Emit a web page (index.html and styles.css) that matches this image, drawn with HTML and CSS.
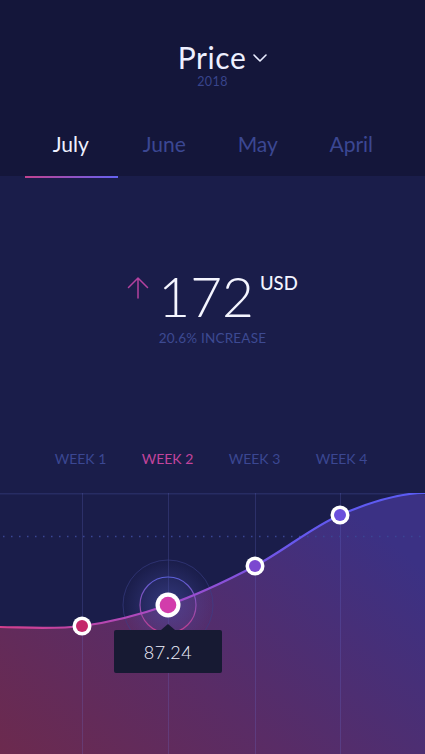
FILE: index.html
```html
<!DOCTYPE html>
<html lang="en">
<head>
<meta charset="utf-8">
<title>Price</title>
<link rel="stylesheet" href="styles.css">
</head>
<body>
<div class="screen">
  <header class="header">
    <div class="title-row">
      <span class="title">Price</span>
      <svg class="chevron" width="14" height="8" viewBox="0 0 14 8"><path d="M1 1 L7 7 L13 1" fill="none" stroke="#e9ecff" stroke-width="1.6" stroke-linecap="round" stroke-linejoin="round"/></svg>
    </div>
    <div class="year">2018</div>
    <nav class="tabs">
      <span class="tab active">July</span>
      <span class="tab">June</span>
      <span class="tab">May</span>
      <span class="tab">April</span>
    </nav>
  </header>
  <main class="main">
    <section class="hero">
      <div class="value-row">
        <svg class="arrow" width="22" height="22" viewBox="0 0 22 22"><path d="M11 1 L11 21 M1.5 10.5 L11 1 L20.5 10.5" fill="none" stroke="#b3419f" stroke-width="1.5" stroke-linecap="round" stroke-linejoin="round"/></svg>
        <span class="value">172</span>
        <span class="unit">USD</span>
      </div>
      <div class="change">20.6% INCREASE</div>
    </section>
    <div class="weeks">
      <span class="week">WEEK 1</span>
      <span class="week active">WEEK 2</span>
      <span class="week">WEEK 3</span>
      <span class="week">WEEK 4</span>
    </div>
    <div class="chart">
      <svg class="chart-svg" width="425" height="261" viewBox="0 0 425 261">
        <defs>
          <linearGradient id="fillGrad" x1="0" y1="1" x2="1" y2="0.3">
            <stop offset="0" stop-color="#6c2a4e"/>
            <stop offset="0.45" stop-color="#592c66"/>
            <stop offset="1" stop-color="#3b3184"/>
          </linearGradient>
          <linearGradient id="lineGrad" x1="0" y1="0" x2="1" y2="0">
            <stop offset="0" stop-color="#d43f8c"/>
            <stop offset="0.4" stop-color="#a44cc8"/>
            <stop offset="0.7" stop-color="#6558ee"/>
            <stop offset="1" stop-color="#5a5cf5"/>
          </linearGradient>
          <linearGradient id="ringGrad" x1="0" y1="0" x2="0" y2="1">
            <stop offset="0" stop-color="#5a5fd8"/>
            <stop offset="1" stop-color="#c43d8e"/>
          </linearGradient>
          <radialGradient id="glow" cx="0.5" cy="0.5" r="0.5">
            <stop offset="0" stop-color="#4a4fa8" stop-opacity="0.55"/>
            <stop offset="1" stop-color="#4a4fa8" stop-opacity="0"/>
          </radialGradient>
        </defs>
        <path d="M0,134 C27.3,134.5 54.7,136.5 82,133 C110.7,129.4 139.3,121.9 168,112 C197,102 226,88.2 255,73 C283.3,58.2 311.7,34.2 340,22 C368.3,9.8 396.7,0 425,0 L425,261 L0,261 Z" fill="url(#fillGrad)"/>
        <rect x="0" y="0" width="425" height="1.5" fill="#272c63"/>
        <g stroke="rgba(110,120,220,0.22)" stroke-width="1">
          <line x1="82.5" y1="0" x2="82.5" y2="261"/>
          <line x1="168.5" y1="0" x2="168.5" y2="261"/>
          <line x1="255.5" y1="0" x2="255.5" y2="261"/>
          <line x1="340.5" y1="0" x2="340.5" y2="261"/>
        </g>
        <line x1="3" y1="43.5" x2="425" y2="43.5" stroke="#3a4694" stroke-width="1.5" stroke-dasharray="1.5 6.5"/>
        <circle cx="168" cy="112" r="45" fill="url(#glow)"/>
        <circle cx="168" cy="112" r="45" fill="none" stroke="#3a3f88" stroke-opacity="0.6" stroke-width="1"/>
        <circle cx="168" cy="112" r="28" fill="none" stroke="url(#ringGrad)" stroke-width="1.2"/>
        <path d="M0,134 C27.3,134.5 54.7,136.5 82,133 C110.7,129.4 139.3,121.9 168,112 C197,102 226,88.2 255,73 C283.3,58.2 311.7,34.2 340,22 C368.3,9.8 396.7,0 425,0" fill="none" stroke="url(#lineGrad)" stroke-width="2.2"/>
        <circle cx="82" cy="133" r="9.5" fill="#ffffff"/>
        <circle cx="82" cy="133" r="6" fill="#c4286a"/>
        <circle cx="255" cy="73" r="9.5" fill="#ffffff"/>
        <circle cx="255" cy="73" r="6" fill="#7b48d0"/>
        <circle cx="340" cy="22" r="9.5" fill="#ffffff"/>
        <circle cx="340" cy="22" r="6" fill="#6a4fdc"/>
        <circle cx="168" cy="112" r="12.5" fill="#ffffff"/>
        <circle cx="168" cy="112" r="8.3" fill="#d23cab"/>
      </svg>
      <div class="tooltip">87.24</div>
    </div>
  </main>
</div>
</body>
</html>
```

FILE: styles.css
```css
* {
  box-sizing: border-box;
}

html, body {
  margin: 0;
  padding: 0;
  background: #1a1d4a;
}

body {
  font-family: Lato, "Open Sans", sans-serif;
  width: 425px;
  height: 754px;
  overflow: hidden;
}

.screen {
  width: 425px;
  height: 754px;
  display: flex;
  flex-direction: column;
}

.header {
  background: #14163a;
  padding-top: 41px;
  height: 176px;
}

.title-row {
  display: flex;
  justify-content: center;
  align-items: center;
  height: 32px;
  gap: 7px;
  padding-left: 20px;
}

.title {
  font-size: 30px;
  line-height: 32px;
  color: #eef0ff;
  font-weight: 400;
  letter-spacing: 0.6px;
}

.chevron {
  margin-top: 2px;
}

.year {
  text-align: center;
  font-size: 12.5px;
  line-height: 14px;
  margin-top: 2px;
  color: #38448c;
  letter-spacing: 0.4px;
}

.tabs {
  display: grid;
  grid-template-columns: repeat(4, 93.5px);
  padding-left: 24px;
  margin-top: 40px;
}

.tab {
  position: relative;
  text-align: center;
  font-size: 21px;
  line-height: 30px;
  color: #3b4792;
  padding-bottom: 17px;
}

.tab.active {
  color: #eef0ff;
}

.tab.active::after {
  content: "";
  position: absolute;
  left: 1px;
  right: 0;
  bottom: -2px;
  height: 2px;
  background: linear-gradient(90deg, #c2428f, #6462f2);
}

.main {
  flex: 1;
  display: flex;
  flex-direction: column;
  background: #1a1d4a;
}

.hero {
  padding-top: 90px;
  display: flex;
  flex-direction: column;
  align-items: center;
}

.value-row {
  display: flex;
  align-items: flex-start;
  height: 60px;
  padding-left: 0;
}

.arrow {
  margin-top: 11px;
  margin-right: 9px;
}

.value {
  font-size: 55px;
  line-height: 60px;
  font-weight: 300;
  color: #f4f5ff;
  letter-spacing: 0;
}

.unit {
  font-size: 18.5px;
  line-height: 20px;
  margin-top: 7px;
  margin-left: 6px;
  color: #f4f5ff;
  font-weight: 500;
}

.change {
  margin-top: 3px;
  font-size: 13.5px;
  line-height: 18px;
  color: #3d4a92;
  letter-spacing: 0.2px;
}

.weeks {
  display: grid;
  grid-template-columns: repeat(4, 87px);
  padding-left: 37px;
  margin-top: 103px;
}

.week {
  text-align: center;
  font-size: 14px;
  line-height: 18px;
  color: #3b4792;
}

.week.active {
  color: #c2449c;
}

.chart {
  position: relative;
  margin-top: 25px;
  height: 261px;
}

.chart-svg {
  display: block;
}

.tooltip {
  position: absolute;
  left: 114px;
  top: 137px;
  width: 108px;
  height: 43px;
  background: #171a33;
  border-radius: 2px;
  color: #f2f3ff;
  font-size: 18px;
  font-weight: 300;
  letter-spacing: 0.5px;
  display: flex;
  align-items: center;
  justify-content: center;
}

.tooltip::before {
  content: "";
  position: absolute;
  left: 47px;
  top: -6px;
  border-left: 7px solid transparent;
  border-right: 7px solid transparent;
  border-bottom: 6px solid #171a33;
}
```
